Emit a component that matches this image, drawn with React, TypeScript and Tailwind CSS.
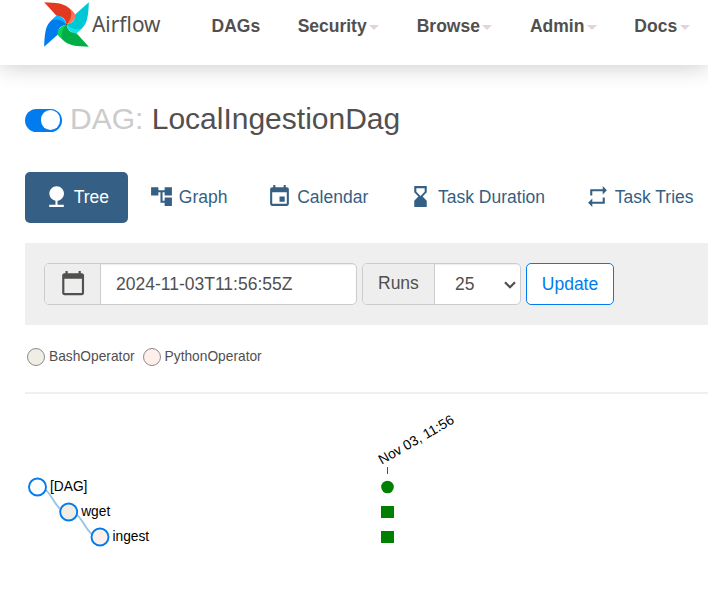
import React from "react";

const navItems = [
  { label: "DAGs", menu: false },
  { label: "Security", menu: true },
  { label: "Browse", menu: true },
  { label: "Admin", menu: true },
  { label: "Docs", menu: true },
];

const icons = {
  tree: "M13 16.12c3.47-.41 6.17-3.36 6.17-6.95 0-3.87-3.13-7-7-7s-7 3.13-7 7c0 3.47 2.52 6.34 5.83 6.89V20H5v2h14v-2h-6v-3.88z",
  graph: "M22 11V3h-7v3H9V3H2v8h7V8h2v10h4v3h7v-8h-7v3h-2V8h2v3z",
  calendar:
    "M17 12h-5v5h5v-5zM16 1v2H8V1H6v2H5c-1.11 0-1.99.9-1.99 2L3 19c0 1.1.89 2 2 2h14c1.1 0 2-.9 2-2V5c0-1.1-.9-2-2-2h-1V1h-2zm3 18H5V8h14v11z",
  hourglass:
    "M18 22l-.01-6L14 12l3.99-4.01L18 2H6v6l4 4-4 3.99V22h12zM8 7.5V4h8v3.5l-4 4-4-4z",
  repeat: "M7 7h10v3l4-4-4-4v3H5v6h2V7zm10 10H7v-3l-4 4 4 4v-3h12v-6h-2v4z",
  today:
    "M20 3h-1V1h-2v2H7V1H5v2H4c-1.1 0-2 .9-2 2v16c0 1.1.9 2 2 2h16c1.1 0 2-.9 2-2V5c0-1.1-.9-2-2-2zm0 18H4V8h16v13z",
};

const tabs = [
  { label: "Tree", icon: icons.tree, active: true },
  { label: "Graph", icon: icons.graph, active: false },
  { label: "Calendar", icon: icons.calendar, active: false },
  { label: "Task Duration", icon: icons.hourglass, active: false },
  { label: "Task Tries", icon: icons.repeat, active: false },
];

const blades = [
  { angle: 0, main: "#e43921", light: "#ff7557" },
  { angle: 90, main: "#00c7d4", light: "#11e1ee" },
  { angle: 180, main: "#00ad46", light: "#04d659" },
  { angle: 270, main: "#017cee", light: "#0cb6ff" },
];

function Icon({ d, className }: { d: string; className: string }) {
  return (
    <svg viewBox="0 0 24 24" className={className} fill="currentColor">
      <path d={d} />
    </svg>
  );
}

function Logo() {
  return (
    <svg viewBox="0 0 120 50" className="h-[50px] w-[120px] shrink-0">
      <g transform="translate(22.5 24.5) scale(0.3333)">
        {blades.map((b) => (
          <path
            key={b.angle}
            transform={`rotate(${b.angle})`}
            fill={b.light}
            d="M4 -51C13 -47 22 -38 28 -28C26 -15 17 -4 0 0C8 -15 12 -35 4 -51Z"
          />
        ))}
        {blades.map((b) => (
          <path
            key={b.angle}
            transform={`rotate(${b.angle})`}
            fill={b.main}
            d="M-67 -67C-32 -66 -4 -63 8 -49C20 -36 15 -16 0 0C-3 -16 -12 -27 -30 -26Z"
          />
        ))}
        <circle r="2.5" fill="#51504f" />
      </g>
      <text
        x="48"
        y="32.3"
        textLength="68.5"
        lengthAdjust="spacingAndGlyphs"
        fontSize="21.5"
        fill="#51504f"
        fontFamily="'Noto Sans', sans-serif"
      >
        Airflow
      </text>
    </svg>
  );
}

function Header() {
  return (
    <header className="flex h-[65px] items-start bg-white pl-11 shadow-[0_0_25px_rgba(0,0,0,0.24)]">
      <Logo />
      <nav className="ml-[47.5px] flex h-[52px] items-center gap-[37.5px] font-bold">
        {navItems.map((n) => (
          <span key={n.label} className="flex items-center">
            {n.label}
            {n.menu && (
              <span className="mt-[3px] ml-[2.5px] border-x-5 border-t-5 border-x-transparent border-t-[#e2d2e2]" />
            )}
          </span>
        ))}
      </nav>
    </header>
  );
}

function Filters() {
  return (
    <div className="mt-5 flex h-[82px] items-center bg-[#efefef] pl-[19px]">
      <div className="flex h-[42px] w-[313px] overflow-hidden rounded-[5px] border border-[#ccc] bg-white">
        <div className="flex w-14 items-center justify-center border-r border-[#ccc] bg-[#eee] pb-[2px] pl-[1px]">
          <Icon d={icons.today} className="size-[26.25px] shrink-0" />
        </div>
        <div className="flex flex-1 items-center pl-[15px] shadow-[inset_0_1px_1px_rgba(0,0,0,0.075)]">
          2024-11-03T11:56:55Z
        </div>
      </div>
      <div className="ml-[5px] flex h-[42px] w-[159px] overflow-hidden rounded-[5px] border border-[#ccc] bg-white">
        <div className="flex w-[72px] items-center border-r border-[#ccc] bg-[#eee] pb-[2px] pl-[15px]">
          Runs
        </div>
        <div className="flex flex-1 items-center justify-between pr-1 pl-5 shadow-[inset_0_1px_1px_rgba(0,0,0,0.075)]">
          25
          <svg viewBox="0 0 12 8" className="mt-[2px] h-2 w-3" fill="none">
            <path d="M1 1.2L6 6.2L11 1.2" stroke="#51504f" strokeWidth="2.2" />
          </svg>
        </div>
      </div>
      <button className="ml-[5px] h-[42px] w-[88px] rounded-[5px] border border-[#017cee] bg-white text-[#017cee]">
        Update
      </button>
    </div>
  );
}

function TreeChart() {
  return (
    <svg
      viewBox="0 0 683 203"
      className="block h-[203px] w-[683px]"
      fontFamily="'Liberation Sans', Arial, sans-serif"
      fontSize="13.75"
    >
      <g fill="none" stroke="#9ac4e6" strokeWidth="1.9">
        <path d="M12.5 93C28 93 28 118 43.7 118" />
        <path d="M43.7 118C59.3 118 59.3 143 75 143" />
      </g>
      <g stroke="#017cee" strokeWidth="1.9">
        <circle cx="12.5" cy="93" r="8.5" fill="#fff" />
        <circle cx="43.7" cy="118" r="8.5" fill="#f0ede4" />
        <circle cx="75" cy="143" r="8.5" fill="#ffefeb" />
      </g>
      <text x="25" y="97.3">[DAG]</text>
      <text x="56.2" y="122.3">wget</text>
      <text x="87.5" y="147.3">ingest</text>
      <text transform="translate(356.8 70.8) rotate(-30)">Nov 03, 11:56</text>
      <path d="M362.5 73V80" stroke="#51504f" />
      <g fill="#008000">
        <circle cx="362.5" cy="93" r="6.3" />
        <rect x="356" y="112" width="13" height="12" />
        <rect x="356" y="137" width="13" height="12" />
      </g>
    </svg>
  );
}

export default function App() {
  return (
    <div className="h-[597px] w-[708px] overflow-hidden bg-white font-['Liberation_Sans',Arial,sans-serif] text-[17.5px] text-[#51504f]">
      <Header />
      <main className="pl-[25px]">
        <div className="flex h-[107px] items-center">
          <div className="mt-[3px] flex h-[23px] w-[37px] items-center justify-end rounded-full bg-[#017cee] pr-[2px]">
            <div className="size-[19.5px] rounded-full bg-white" />
          </div>
          <h1 className="ml-2 text-[30px] leading-[34px] whitespace-nowrap">
            <span className="text-[#cbcbcb]">DAG:</span> LocalIngestionDag
          </h1>
        </div>
        <div className="flex gap-[2.5px] whitespace-nowrap">
          {tabs.map((t) => (
            <div
              key={t.label}
              className={
                t.active
                  ? "flex h-[51px] items-center gap-[4.75px] rounded-[5px] bg-[#355f84] pr-[18.5px] pl-[19px] text-white"
                  : "flex h-[51px] items-center gap-[4.75px] pr-[18.5px] pl-[19px] text-[#355f84]"
              }
            >
              <Icon d={t.icon} className="-mt-[2px] size-[25px] shrink-0" />
              {t.label}
            </div>
          ))}
        </div>
        <Filters />
        <div className="flex h-[67px] items-center gap-[9px] pb-[2px] pl-[2px] text-[13.75px]">
          <span className="flex items-center gap-1">
            <i className="-mt-px size-[18px] rounded-full border border-[#8c8b89] bg-[#f0ede4]" />
            BashOperator
          </span>
          <span className="-ml-px flex items-center gap-[4px]">
            <i className="-mt-px size-[18px] rounded-full border border-[#8c8b89] bg-[#ffefeb]" />
            PythonOperator
          </span>
        </div>
        <div className="h-[2px] bg-[#efefef]" />
        <TreeChart />
      </main>
    </div>
  );
}
